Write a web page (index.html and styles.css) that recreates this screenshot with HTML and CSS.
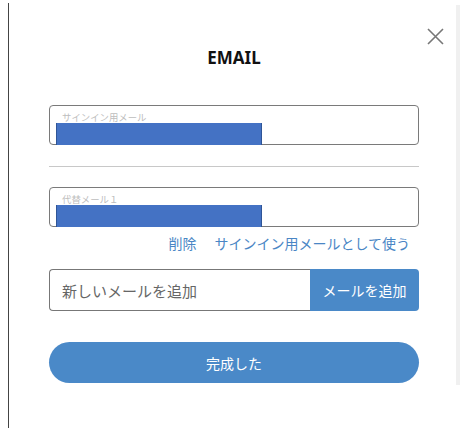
FILE: index.html
```html
<!DOCTYPE html>
<html lang="ja">
<head>
    <meta charset="UTF-8">
    <meta name="viewport" content="width=device-width, initial-scale=1.0">
    <title>EMAIL</title>
    <link rel="stylesheet" href="styles.css">
</head>
<body>

    <div class="screen">
        <div class="modal">
            <button class="close" type="button" aria-label="閉じる">
                <svg width="17" height="17" viewBox="0 0 17 17">
                    <path d="M1 1 L16 16 M16 1 L1 16" stroke="#777" stroke-width="1.6" fill="none"/>
                </svg>
            </button>

            <h1>EMAIL</h1>

            <div class="field">
                <span class="field-label">サインイン用メール</span>
                <span class="mask"></span>
            </div>

            <hr class="divider">

            <div class="field">
                <span class="field-label">代替メール１</span>
                <span class="mask"></span>
            </div>

            <div class="links">
                <a href="#">削除</a>
                <a href="#">サインイン用メールとして使う</a>
            </div>

            <form class="add-form">
                <input type="text" placeholder="新しいメールを追加">
                <button type="submit">メールを追加</button>
            </form>

            <button class="done" type="button">完成した</button>
        </div>
        <div class="scroll"></div>
    </div>

</body>
</html>
```

FILE: styles.css
```css
body {
  margin: 0;
  background: #fff;
  font-family: "Noto Sans CJK JP", "Noto Sans", sans-serif;
  color: #333;
}

.screen {
  display: flex;
  padding-left: 8px;
}

.modal {
  position: relative;
  flex: 1;
  margin-top: 3px;
  height: 425px;
  border-left: 1px solid #444;
  padding: 0 37px 0 40px;
  display: flex;
  flex-direction: column;
}

.scroll {
  width: 4px;
  margin-top: 5px;
  height: 380px;
  background: #f0f0f0;
}

.close {
  position: absolute;
  top: 25px;
  right: 12px;
  padding: 0;
  border: none;
  background: none;
  cursor: pointer;
  line-height: 0;
}

h1 {
  margin: 44px 0 0;
  text-align: center;
  font-family: "Noto Sans", sans-serif;
  font-size: 17px;
  line-height: 22px;
  font-weight: 700;
  color: #111;
}

.field {
  height: 40px;
  box-sizing: border-box;
  border: 1px solid #7a7a7a;
  border-radius: 4px;
  padding-top: 6px;
  display: flex;
  flex-direction: column;
  align-items: flex-start;
}

.modal h1 + .field {
  margin-top: 36px;
}

.field-label {
  padding-left: 12px;
  font-size: 9.4px;
  line-height: 11px;
  color: #bdbdbd;
}

.mask {
  margin: 0 0 -1px 6px;
  width: 204px;
  height: 22px;
  background: #4472c4;
  border-left: 1px solid #2f5597;
  border-right: 1px solid #2f5597;
}

.divider {
  margin: 21px 0 20px;
  border: none;
  border-top: 1px solid #c8c8c8;
}

.links {
  margin-top: 7px;
  padding-right: 9px;
  display: flex;
  justify-content: flex-end;
  gap: 18px;
  font-size: 14px;
  line-height: 18px;
}

.links a {
  color: #4a86c5;
  text-decoration: none;
}

.add-form {
  margin: 17px 0 0;
  height: 42px;
  display: flex;
}

.add-form input {
  flex: 1;
  min-width: 0;
  box-sizing: border-box;
  border: 1px solid #777;
  border-right: none;
  border-radius: 4px 0 0 4px;
  padding: 0 12px;
  font-family: inherit;
  font-size: 15px;
  color: #333;
}

.add-form input::placeholder {
  color: #666;
}

.add-form button {
  width: 109px;
  border: none;
  border-radius: 0 4px 4px 0;
  background: #4a89c8;
  color: #fff;
  font-family: inherit;
  font-size: 14px;
  cursor: pointer;
}

.done {
  margin-top: 31px;
  height: 41px;
  border: none;
  border-radius: 21px;
  background: #4a89c8;
  color: #fff;
  font-family: inherit;
  font-size: 14px;
  cursor: pointer;
}
```
